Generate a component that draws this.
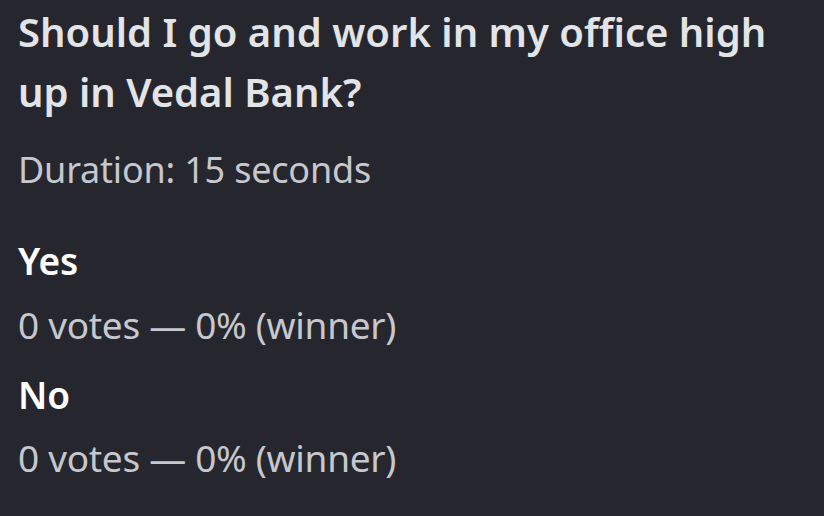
export default function App() {
  return (
    <div className="w-[824px] h-[516px] bg-[#26272e] overflow-hidden px-[18px] pt-[2px]" style={{ fontFamily: '"Noto Sans", sans-serif' }}>
      <div className="text-[#e2e4e8] font-semibold text-[40px] leading-[60px]">
        Should I go and work in my office high up in Vedal Bank?
      </div>
      <div className="text-[#c6c8ce] text-[36px] leading-none tracking-[-0.2px] mt-[30px]">
        Duration: 15 seconds
      </div>
      <div className="text-white font-semibold text-[37px] leading-none mt-[54px]">Yes</div>
      <div className="text-[#c6c8ce] text-[37px] leading-none tracking-[-0.3px] mt-[27px]">0 votes — 0% (winner)</div>
      <div className="text-white font-semibold text-[37px] leading-none mt-[33px]">No</div>
      <div className="text-[#c6c8ce] text-[37px] leading-none tracking-[-0.3px] mt-[26px]">0 votes — 0% (winner)</div>
    </div>
  );
}
